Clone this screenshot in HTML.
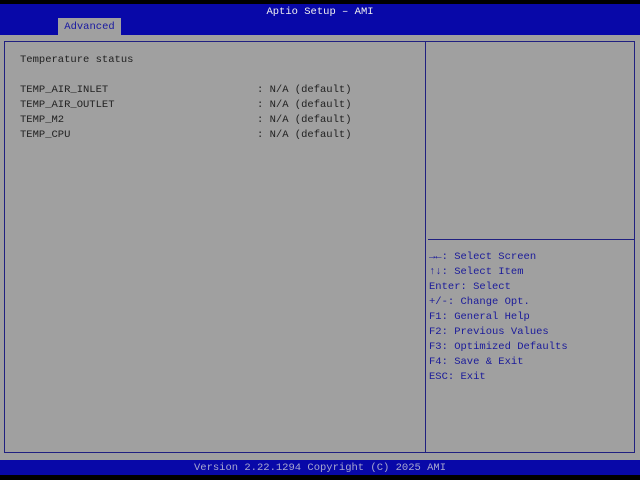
<!DOCTYPE html><html><head><style>
body{margin:0;width:640px;height:480px;background:#000;position:relative;overflow:hidden;font-family:"Liberation Mono",monospace;font-size:10.5px}
div{position:absolute}
.t{white-space:pre;line-height:15px}
</style></head><body>
<div style="left:0;top:4px;width:640px;height:31px;background:#0808a8"></div>
<div class="t" style="left:0;top:5px;width:640px;text-align:center;color:#f0f0f0">Aptio Setup – AMI</div>
<div style="left:58px;top:18px;width:63px;height:17px;background:#a0a0a0"></div>
<div class="t" style="left:58px;top:20px;width:63px;text-align:center;color:#1818a0">Advanced</div>
<div style="left:0;top:35px;width:640px;height:425px;background:#a0a0a0"></div>
<div style="left:4px;top:41px;width:420px;height:410px;border:1px solid #202080"></div>
<div style="left:425px;top:41px;width:209px;height:410px;border:1px solid #202080;border-left:none"></div>
<div style="left:428px;top:239px;width:206px;height:1px;background:#202080"></div>
<div class="t" style="left:20px;top:53px;color:#202020">Temperature status</div>
<div class="t" style="left:20px;top:83px;color:#202020">TEMP_AIR_INLET
TEMP_AIR_OUTLET
TEMP_M2
TEMP_CPU</div>
<div class="t" style="left:257px;top:83px;color:#202020">: N/A (default)
: N/A (default)
: N/A (default)
: N/A (default)</div>
<div class="t" style="left:429px;top:250px;color:#1a1a9a">→←: Select Screen
↑↓: Select Item
Enter: Select
+/-: Change Opt.
F1: General Help
F2: Previous Values
F3: Optimized Defaults
F4: Save &amp; Exit
ESC: Exit</div>
<div style="left:0;top:460px;width:640px;height:15px;background:#0808a8"></div>
<div class="t" style="left:0;top:461px;width:640px;text-align:center;color:#a8a8d0">Version 2.22.1294 Copyright (C) 2025 AMI</div>
</body></html>
